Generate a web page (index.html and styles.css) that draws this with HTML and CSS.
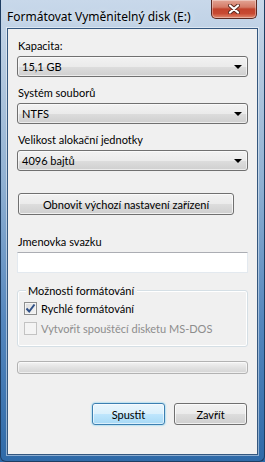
FILE: index.html
```html
<!DOCTYPE html>
<html lang="cs">
<head>
    <meta charset="UTF-8">
    <title>Formátovat Vyměnitelný disk (E:)</title>
    <link rel="stylesheet" href="styles.css">
</head>
<body>
    <div class="window">
        <div class="titlebar">
            <span class="title">Formátovat Vyměnitelný disk (E:)</span>
            <div class="close-btn">
                <svg width="12" height="10" viewBox="0 0 12 10">
                    <path d="M2 1.5 L10 8.5 M10 1.5 L2 8.5" stroke="#5a2a20" stroke-width="4" stroke-linecap="round"/>
                    <path d="M2 1.5 L10 8.5 M10 1.5 L2 8.5" stroke="#ffffff" stroke-width="2.2" stroke-linecap="round"/>
                </svg>
            </div>
        </div>
        <div class="panel">
            <div class="field">
                <div class="label">Kapacita:</div>
                <div class="combo"><span>15,1 GB</span><span class="arrow"></span></div>
            </div>
            <div class="field">
                <div class="label">Systém souborů</div>
                <div class="combo"><span>NTFS</span><span class="arrow"></span></div>
            </div>
            <div class="field">
                <div class="label">Velikost alokační jednotky</div>
                <div class="combo"><span>4096 bajtů</span><span class="arrow"></span></div>
            </div>
            <div class="reset-row">
                <button class="btn reset-btn">Obnovit výchozí nastavení zařízení</button>
            </div>
            <div class="field name-field">
                <div class="label">Jmenovka svazku</div>
                <div class="textbox"></div>
            </div>
            <div class="groupbox">
                <div class="group-title">Možnosti formátování</div>
                <div class="check-row">
                    <span class="checkbox checked">
                        <svg width="11" height="11" viewBox="0 0 11 11">
                            <path d="M1.5 5.5 L4.2 8.5 L9.5 1.5" stroke="#2e4f86" stroke-width="2" fill="none"/>
                        </svg>
                    </span>
                    <span>Rychlé formátování</span>
                </div>
                <div class="check-row disabled">
                    <span class="checkbox"></span>
                    <span>Vytvořit spouštěcí disketu MS-DOS</span>
                </div>
            </div>
            <div class="progress"></div>
            <div class="actions">
                <button class="btn default-btn">Spustit</button>
                <button class="btn">Zavřít</button>
            </div>
        </div>
    </div>
</body>
</html>
```

FILE: styles.css
```css
* {
    margin: 0;
    padding: 0;
    box-sizing: border-box;
}
body {
    width: 265px;
    height: 462px;
    overflow: hidden;
    background-color: #2d68a8;
    font-family: Lato, "Noto Sans", sans-serif;
    font-size: 11px;
    color: #000;
}
.window {
    width: 265px;
    height: 462px;
    display: flex;
    flex-direction: column;
    background: linear-gradient(to bottom, #c8d8ea 0%, #b4c9df 15%, #8fb0d2 40%, #5486bd 70%, #2f6aa8 100%);
    border: 1px solid #1e3d62;
    border-top: none;
    border-radius: 0 0 6px 6px;
}
.titlebar {
    height: 28px;
    display: flex;
    justify-content: space-between;
    align-items: flex-start;
    padding: 0 7px 0 6px;
}
.title {
    margin-top: 8px;
    font-family: "Noto Sans", sans-serif;
    font-size: 12px;
    color: #000;
    text-shadow: 0 0 6px rgba(255, 255, 255, 0.9);
}
.close-btn {
    width: 46px;
    height: 19px;
    display: flex;
    justify-content: center;
    align-items: center;
    background: linear-gradient(to bottom, #e3a595 0%, #d47a66 40%, #c2432c 50%, #c84a32 75%, #e08a6e 100%);
    border: 1px solid #5c2a22;
    border-top: none;
    border-radius: 0 0 5px 5px;
    box-shadow: inset 0 0 0 1px rgba(255, 255, 255, 0.35);
}
.panel {
    flex: 1;
    margin: 0 6px 6px 6px;
    background-color: #f0f0f0;
    border: 1px solid #34577e;
    box-shadow: 0 0 0 1px rgba(255, 255, 255, 0.45);
    padding: 9px 9px 0 9px;
    display: flex;
    flex-direction: column;
}
.field {
    display: flex;
    flex-direction: column;
    gap: 3px;
    margin-bottom: 8px;
}
.label {
    height: 15px;
    line-height: 15px;
    padding-left: 1px;
}
.combo {
    height: 21px;
    display: flex;
    justify-content: space-between;
    align-items: center;
    padding: 0 5px 0 4px;
    border: 1px solid #707070;
    border-radius: 3px;
    background: linear-gradient(to bottom, #f2f2f2 0%, #ebebeb 50%, #dddddd 51%, #cfcfcf 100%);
    box-shadow: inset 0 0 0 1px rgba(255, 255, 255, 0.6);
}
.arrow {
    width: 0;
    height: 0;
    border-left: 4px solid transparent;
    border-right: 4px solid transparent;
    border-top: 4px solid #000;
}
.reset-row {
    margin-top: 14px;
    padding-left: 1px;
}
.btn {
    height: 22px;
    font-family: inherit;
    font-size: 11px;
    color: #000;
    border: 1px solid #707070;
    border-radius: 3px;
    background: linear-gradient(to bottom, #f2f2f2 0%, #ebebeb 50%, #dddddd 51%, #cfcfcf 100%);
    box-shadow: inset 0 0 0 1px rgba(255, 255, 255, 0.7);
}
.reset-btn {
    width: 216px;
}
.name-field {
    margin-top: 19px;
    margin-bottom: 0;
}
.textbox {
    height: 21px;
    background-color: #fff;
    border: 1px solid #e3e9ef;
    border-top-color: #abadb3;
}
.groupbox {
    margin-top: 17px;
    height: 57px;
    border: 1px solid #d5dfe5;
    border-radius: 3px;
    box-shadow: inset 0 0 0 1px #fff;
    padding: 0 6px;
    display: flex;
    flex-direction: column;
}
.group-title {
    margin-top: -8px;
    margin-left: 2px;
    align-self: flex-start;
    background-color: #f0f0f0;
    padding: 0 3px 0 2px;
    height: 15px;
    line-height: 15px;
}
.check-row {
    display: flex;
    align-items: center;
    gap: 4px;
    height: 20px;
}
.check-row:first-of-type {
    margin-top: 4px;
}
.checkbox {
    width: 13px;
    height: 13px;
    display: flex;
    justify-content: center;
    align-items: center;
    border: 1px solid #8e8f8f;
    background: linear-gradient(135deg, #dcdcdc 0%, #f4f4f4 100%);
    box-shadow: inset 0 0 0 1px #f4f4f4;
}
.disabled {
    color: #8d8d8d;
}
.disabled .checkbox {
    border-color: #c3c3c3;
    background: #f4f4f4;
}
.progress {
    margin-top: 14px;
    height: 13px;
    border: 1px solid #b2b2b2;
    border-radius: 3px;
    background: linear-gradient(to bottom, #f3f3f3 0%, #e2e2e2 50%, #d4d4d4 100%);
    box-shadow: inset 0 0 0 1px rgba(255, 255, 255, 0.6);
}
.actions {
    margin-top: 29px;
    display: flex;
    justify-content: flex-end;
    gap: 9px;
    padding-right: 1px;
}
.actions .btn {
    width: 73px;
}
.default-btn {
    border-color: #3c7fb1;
    background: linear-gradient(to bottom, #eaf6fd 0%, #d9f0fc 50%, #bee6fd 51%, #a7d9f5 100%);
    box-shadow: inset 0 0 0 1px rgba(255, 255, 255, 0.6), 0 0 2px #48c3f0;
}
```
